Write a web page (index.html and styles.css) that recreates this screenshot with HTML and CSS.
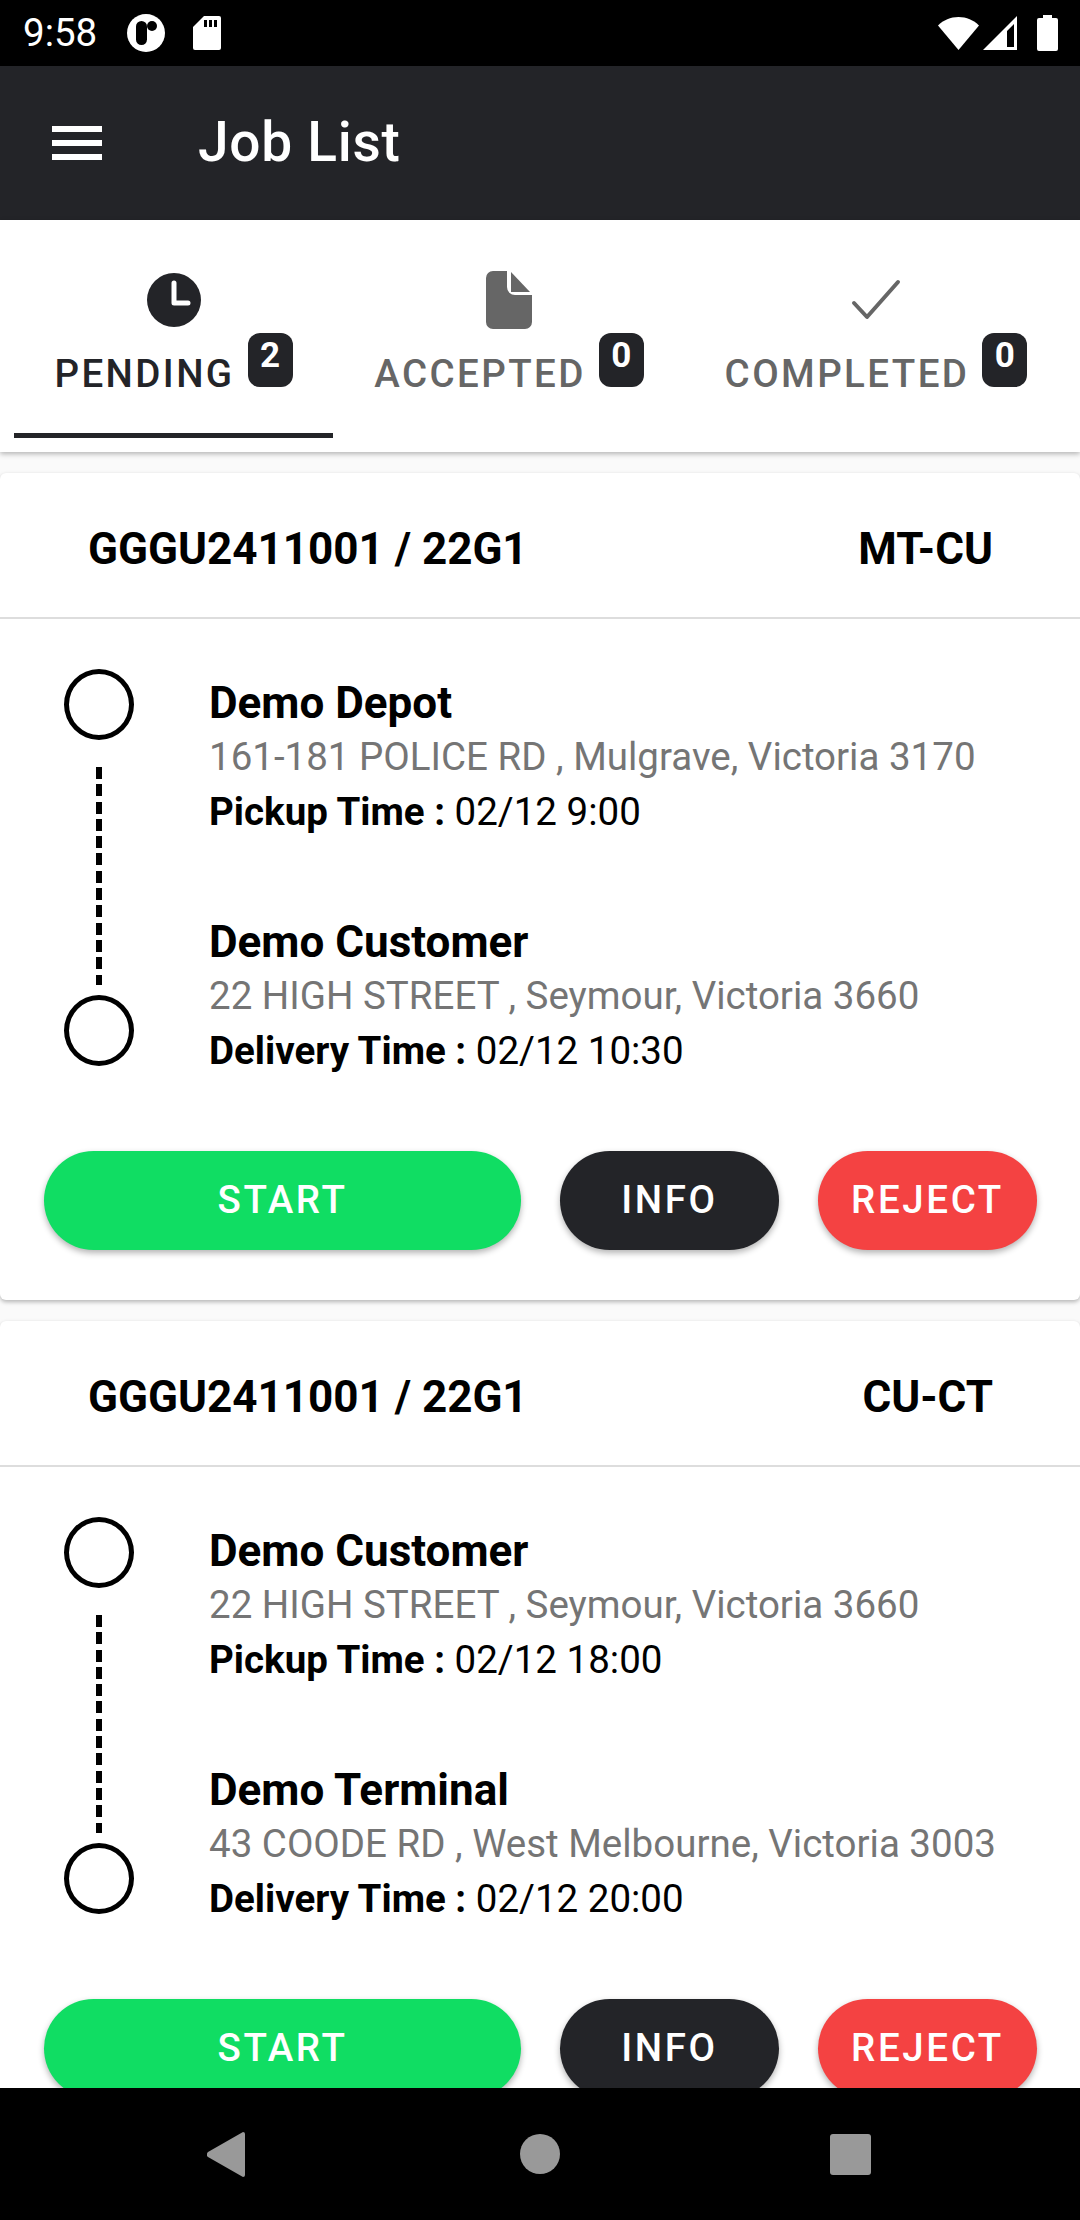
FILE: index.html
```html
<!DOCTYPE html>
<html lang="en">
<head>
<meta charset="utf-8">
<title>Job List</title>
<link rel="stylesheet" href="styles.css">
</head>
<body>
<div class="app">
  <div class="status">
    <span class="clock-text">9:58</span>
    <svg class="st-app" width="38" height="38" viewBox="0 0 38 38"><circle cx="19" cy="19" r="19" fill="#fff"/><rect x="9" y="7" width="11" height="24" rx="5.500" fill="#000"/><circle cx="25" cy="12" r="5" fill="#000"/></svg>
    <svg class="st-sd" width="28" height="34" viewBox="0 0 28 34"><path d="M11 0h15a2 2 0 0 1 2 2v30a2 2 0 0 1-2 2H2a2 2 0 0 1-2-2V11z" fill="#fff"/><path d="M11 4h3v7h-3zM16 4h3v7h-3zM21 4h3v7h-3z" fill="#000"/></svg>
    <span class="status-gap"></span>
    <svg class="st-wifi" width="41" height="33" viewBox="0 0 41 33"><path d="M20.500 33 0 8.500C5.500 3 12.500 0 20.500 0S35.500 3 41 8.500z" fill="#fff"/></svg>
    <svg class="st-signal" width="34" height="34" viewBox="0 0 34 34"><path d="M34 0v34H0zM31 8 24 15v16h7z" fill="#fff" fill-rule="evenodd"/></svg>
    <svg class="st-batt" width="21" height="36" viewBox="0 0 21 36"><path d="M6 0h9v3h4a2 2 0 0 1 2 2v29a2 2 0 0 1-2 2H2a2 2 0 0 1-2-2V5a2 2 0 0 1 2-2h4z" fill="#fff"/></svg>
  </div>
  <header class="appbar">
    <div class="menu"><span></span><span></span><span></span></div>
    <h1 class="title">Job List</h1>
  </header>
  <nav class="tabs">
    <div class="tab tab-active">
      <svg class="tab-icon" width="54" height="58" viewBox="0 0 54 58"><circle cx="27" cy="29" r="27" fill="#232428"/><path d="M27 12v20h14" fill="none" stroke="#fff" stroke-width="5" stroke-linecap="round" stroke-linejoin="round"/></svg>
      <div class="tab-label"><span>PENDING</span><b class="badge">2</b></div>
    </div>
    <div class="tab">
      <svg class="tab-icon" width="46" height="58" viewBox="0 0 46 58"><path d="M7 0h14v16a8 8 0 0 0 8 8h17v27a7 7 0 0 1-7 7H7a7 7 0 0 1-7-7V7a7 7 0 0 1 7-7z" fill="#666"/><path d="M25 1 44 21H25z" fill="#666"/></svg>
      <div class="tab-label"><span>ACCEPTED</span><b class="badge">0</b></div>
    </div>
    <div class="tab">
      <svg class="tab-icon" width="54" height="58" viewBox="0 0 54 58"><path d="M5 32 18 46 49 11" fill="none" stroke="#666" stroke-width="4" stroke-linecap="round" stroke-linejoin="round"/></svg>
      <div class="tab-label"><span>COMPLETED</span><b class="badge">0</b></div>
    </div>
    <div class="tab-line"></div>
  </nav>
  <main class="list">
    <section class="card">
      <div class="card-head"><span>GGGU2411001 / 22G1</span><span>MT-CU</span></div>
      <div class="route">
        <div class="rail"><i class="dot"></i><i class="dash"></i><i class="dot"></i></div>
        <div class="stops">
          <div class="stop">
            <div class="name">Demo Depot</div>
            <div class="addr">161-181 POLICE RD , Mulgrave, Victoria 3170</div>
            <div class="time"><b>Pickup Time :</b> 02/12 9:00</div>
          </div>
          <div class="stop">
            <div class="name">Demo Customer</div>
            <div class="addr">22 HIGH STREET , Seymour, Victoria 3660</div>
            <div class="time"><b>Delivery Time :</b> 02/12 10:30</div>
          </div>
        </div>
      </div>
      <div class="actions">
        <button class="btn btn-start">START</button>
        <button class="btn btn-info">INFO</button>
        <button class="btn btn-reject">REJECT</button>
      </div>
    </section>
    <section class="card">
      <div class="card-head"><span>GGGU2411001 / 22G1</span><span>CU-CT</span></div>
      <div class="route">
        <div class="rail"><i class="dot"></i><i class="dash"></i><i class="dot"></i></div>
        <div class="stops">
          <div class="stop">
            <div class="name">Demo Customer</div>
            <div class="addr">22 HIGH STREET , Seymour, Victoria 3660</div>
            <div class="time"><b>Pickup Time :</b> 02/12 18:00</div>
          </div>
          <div class="stop">
            <div class="name">Demo Terminal</div>
            <div class="addr">43 COODE RD , West Melbourne, Victoria 3003</div>
            <div class="time"><b>Delivery Time :</b> 02/12 20:00</div>
          </div>
        </div>
      </div>
      <div class="actions">
        <button class="btn btn-start">START</button>
        <button class="btn btn-info">INFO</button>
        <button class="btn btn-reject">REJECT</button>
      </div>
    </section>
  </main>
  <footer class="navbar">
    <svg width="38" height="45" viewBox="0 0 38 45"><path d="M36 0a2 2 0 0 1 2 2v41a2 2 0 0 1-2 2L1 25a3.500 3.500 0 0 1 0-5z" fill="#999"/></svg>
    <svg width="40" height="40" viewBox="0 0 40 40"><circle cx="20" cy="20" r="20" fill="#999"/></svg>
    <svg width="41" height="41" viewBox="0 0 41 41"><rect width="41" height="41" rx="3" fill="#999"/></svg>
  </footer>
</div>
</body>
</html>
```

FILE: styles.css
```css
* { box-sizing: border-box; }
html, body { margin: 0; padding: 0; }
body { width: 1080px; height: 2220px; overflow: hidden; font-family: Roboto, "Liberation Sans", sans-serif; background: #fff; }
.app { width: 1080px; height: 2220px; display: flex; flex-direction: column; overflow: hidden; }

.status { flex: 0 0 66px; background: #000; color: #fff; display: flex; align-items: center; padding: 0 22px 0 23px; }
.clock-text { font-size: 38.5px; line-height: 66px; width: 104px; }
.st-sd { margin-left: 28px; }
.status-gap { flex: 1; }
.st-signal { margin-left: 4px; }
.st-batt { margin-left: 20px; }

.appbar { flex: 0 0 154px; background: #232428; display: flex; align-items: center; padding-left: 52px; }
.menu { width: 50px; display: flex; flex-direction: column; gap: 8px; }
.menu span { display: block; height: 6px; background: #fff; }
.title { margin: -2px 0 0 96px; font-size: 55px; line-height: 64px; font-weight: 500; letter-spacing: .75px; color: #fff; }

.tabs { flex: 0 0 232px; background: #fff; position: relative; z-index: 2; box-shadow: 0 2px 5px rgba(0,0,0,.28); display: grid; grid-template-columns: 319px 324px 382px; column-gap: 14px; padding-left: 14px; }
.tab { display: flex; flex-direction: column; align-items: center; color: #666; padding-top: 51px; }
.tab-active { color: #232428; }
.tab-icon { display: block; }
.tab-label { display: flex; align-items: flex-end; margin-top: 4px; height: 54px; font-size: 38.5px; font-weight: 500; letter-spacing: 2.4px; line-height: 45px; }
.tab-label span { position: relative; top: 9px; }
.badge { width: 45px; height: 54px; margin-left: 13px; background: #232428; color: #fff; border-radius: 12px; font-size: 35px; font-weight: 700; letter-spacing: 0; line-height: 46px; text-align: center; }
.tab-line { position: absolute; left: 14px; top: 213px; width: 319px; height: 5px; background: #232428; }

.list { flex: 1; background: #fafafa; overflow: hidden; padding-top: 21px; }
.card { background: #fff; border-radius: 6px; box-shadow: 0 2px 4px rgba(0,0,0,.28); margin-bottom: 21px; height: 827px; }
.card-head { height: 146px; border-bottom: 2px solid #ddd; display: flex; justify-content: space-between; align-items: center; padding: 8px 87px 0 88px; font-size: 44px; font-weight: 700; color: #000; }
.route { display: flex; padding: 50px 0 0 64px; }
.rail { width: 70px; display: flex; flex-direction: column; align-items: center; }
.dot { flex: 0 0 71px; width: 70px; border: 5px solid #000; border-radius: 50%; }
.dash { flex: 0 0 218px; width: 6px; margin: 27px 0 10px; background: repeating-linear-gradient(#000 0 12px, transparent 12px 17.300px); }
.stops { margin-left: 75px; padding-top: 8px; }
.stop { height: 239px; }
.name { font-size: 44px; line-height: 52px; font-weight: 700; color: #000; }
.addr { font-size: 38.5px; line-height: 54px; margin-top: 1px; color: #757575; }
.time { font-size: 38.5px; line-height: 54px; margin-top: 1px; color: #000; }
.time b { font-weight: 700; }

.actions { display: flex; justify-content: space-between; padding: 0 43px 0 44px; margin-top: -4px; }
.btn { height: 99px; border: 0; border-radius: 50px; font: 500 38.5px Roboto, sans-serif; letter-spacing: 2.6px; padding: 0 0 3px; color: #fff; width: 219px; box-shadow: 0 3px 6px rgba(0,0,0,.3); }
.btn-start { width: 477px; background: #10DD63; }
.btn-info { background: #232428; }
.btn-reject { background: #F44242; }

.navbar { flex: 0 0 132px; background: #000; position: relative; z-index: 3; display: grid; grid-template-columns: 452px 176px 444px; align-items: center; justify-items: center; }
```
